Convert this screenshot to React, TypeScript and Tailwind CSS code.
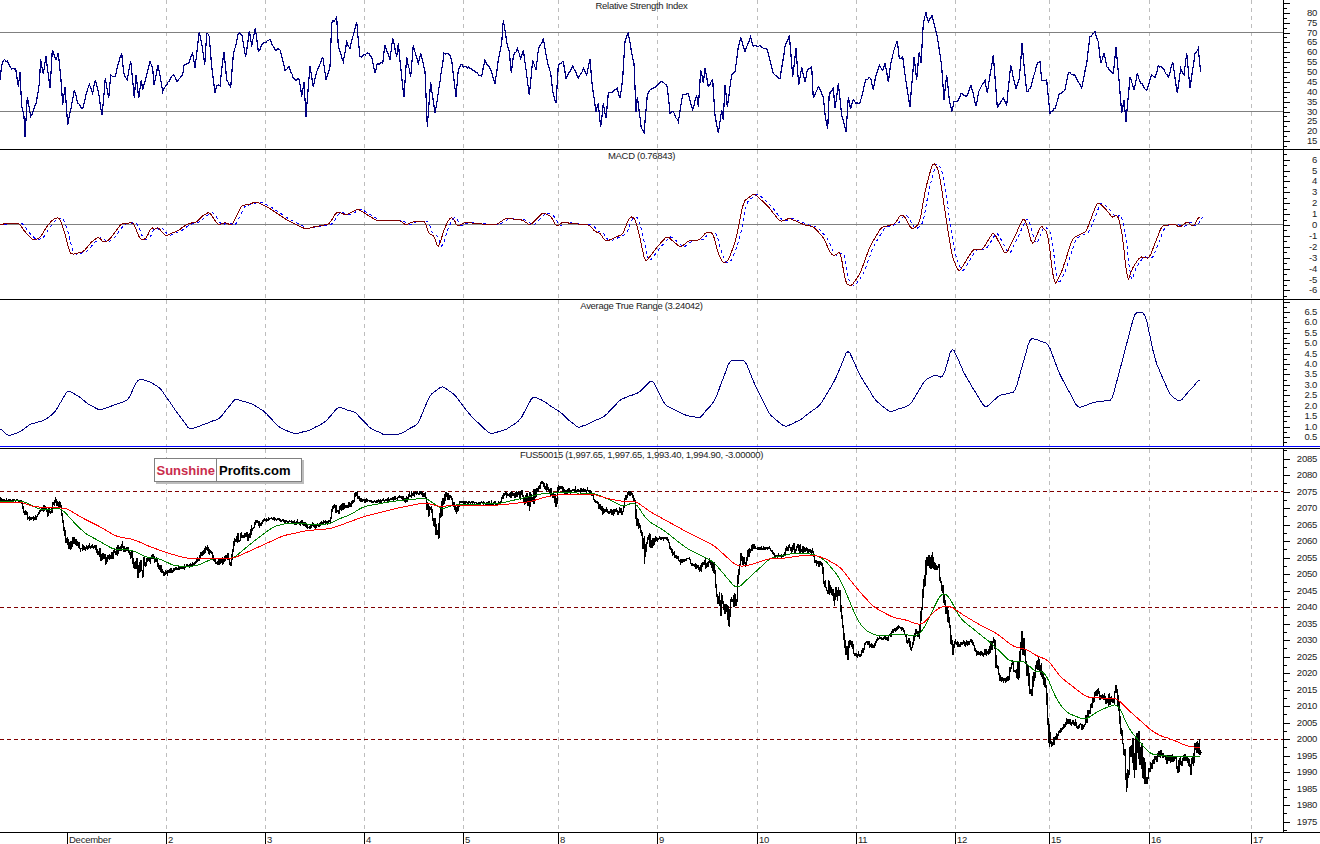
import type { ReactNode } from 'react';

type Pt = [number, number, number?];

const PLOT_W = 1283;
const GRID_X = [166, 265, 364, 463, 558, 657, 757, 856, 955, 1049, 1149, 1251];
const DAYS: [number, string][] = [
  [67, 'December'], [166, '2'], [265, '3'], [364, '4'], [463, '5'], [558, '8'], [657, '9'],
  [757, '10'], [856, '11'], [955, '12'], [1049, '15'], [1149, '16'], [1251, '17'],
];

// traced from crops of the chart, so each block has its own origin and scale
const at = (ox: number, oy: number, sx: number, sy: number, pts: Pt[]): Pt[] =>
  pts.map(([x, y, a]) => [ox + x / sx, oy + y / sy, a]);

const join = (...parts: Pt[][]) => {
  const out: Pt[] = [];
  parts.forEach(part =>
    part.forEach(p => {
      if (!out.length || p[0] > out[out.length - 1][0]) out.push(p);
    }),
  );
  return out;
};

const jag = (i: number) => {
  const s = Math.sin(i * 12.9898) * 43758.5453;
  return (s - Math.floor(s) - 0.5) * 2;
};

const sample = (pts: Pt[], step: number, noise: number) => {
  const out: [number, number][] = [];
  let n = 0;
  for (let i = 0; i < pts.length - 1; i++) {
    const [x0, y0, a0] = pts[i];
    const [x1, y1, a1] = pts[i + 1];
    const count = Math.max(1, Math.round((x1 - x0) / step));
    for (let k = 0; k < count; k++) {
      const t = k / count;
      const amp = (a0 ?? noise) * (1 - t) + (a1 ?? noise) * t;
      out.push([x0 + (x1 - x0) * t, y0 + (y1 - y0) * t + (k === 0 ? 0 : amp * jag(n++))]);
    }
  }
  const last = pts[pts.length - 1];
  out.push([last[0], last[1]]);
  return out;
};

// walk along the knots, add some tick noise, optionally round it off with a moving average
const trace = (pts: Pt[], step = 1, noise = 0, radius = 0) => {
  const raw = sample(pts, step, noise);
  return raw
    .map(([x], i) => {
      const from = Math.max(0, i - radius);
      const to = Math.min(raw.length - 1, i + radius);
      let sum = 0;
      for (let k = from; k <= to; k++) sum += raw[k][1];
      return `${x.toFixed(1)},${(sum / (to - from + 1)).toFixed(1)}`;
    })
    .join(' ');
};

const RSI = join(
  at(0, 0, 3, 3, [[0,240],[5,195],[14,178],[25,190],[35,207],[47,207],[55,260],[60,217],[65,320],[72,350],[75,410],[82,290],[92,350],[108,310],[118,250],[122,178],[130,222],[138,168],[150,265],[157,150],[168,180],[175,158],[183,240],[188,315],[195,262],[203,375],[213,325],[223,270],[233,310],[248,325],[258,285],[268,252],[278,280],[286,240],[296,280],[306,345],[316,235],[326,295],[332,225],[345,230],[352,200],[365,160],[372,222],[382,240],[392,182],[403,295],[408,225],[416,295],[424,240],[428,270],[440,225],[450,185],[458,205],[462,255],[474,195],[488,275],[500,255],[520,225],[532,245],[548,225],[552,195],[566,190],[578,160],[585,205],[598,95],[605,130],[614,195],[620,100],[628,110],[635,200],[645,278],[650,258],[660,258],[665,210],[672,155],[680,240],[692,262],[700,165],[715,100],[726,105],[737,170],[748,92],[755,140],[766,85],[775,155],[790,130],[810,118],[825,150],[840,150],[855,210],[868,200],[880,235],[898,240],[905,290],[912,245],[918,350],[930,197],[940,260],[950,215],[968,170],[978,240],[990,200],[995,70],[1010,52],[1015,140],[1030,185],[1040,125],[1050,145],[1060,105],[1070,65],[1080,170],[1100,160],[1115,170],[1125,218],[1132,190],[1148,190],[1155,135],[1170,180],[1178,115],[1190,170],[1195,130],[1205,230],[1212,290],[1220,172],[1232,230],[1240,135],[1255,190],[1262,160],[1275,215],[1282,380],[1292,245],[1305,340],[1320,245]]),
  at(430, 0, 3, 3, [[30,240],[42,160],[55,160],[65,180],[72,240],[78,290],[85,210],[92,195],[120,205],[155,228],[165,180],[180,205],[195,250],[205,180],[215,130],[220,60],[230,125],[238,155],[244,220],[250,170],[262,145],[272,175],[280,150],[292,240],[298,285],[308,180],[318,210],[325,150],[340,115],[350,175],[362,220],[368,275],[378,310],[385,195],[400,185],[408,235],[428,198],[445,235],[460,205],[470,225],[480,178],[487,260],[498,335],[505,310],[512,380],[520,310],[528,355],[535,280],[550,275],[562,265],[570,295],[578,235],[585,125],[595,100],[605,160],[612,190],[618,335],[622,290],[634,385],[642,398],[652,285],[660,270],[680,258],[690,247],[700,247],[712,262],[720,340],[730,335],[745,365],[758,285],[775,280],[788,330],[800,285],[805,320],[812,210],[820,250],[825,205],[835,260],[848,240],[855,345],[865,400],[875,330],[880,360],[885,255],[892,320],[905,225],[915,215],[925,140],[932,112],[945,155],[962,110],[970,140],[990,135],[1012,150],[1030,220],[1050,235],[1065,140],[1078,105],[1088,230],[1098,145],[1106,255],[1115,200],[1125,245],[1132,210],[1145,200],[1150,295],[1165,260],[1180,290],[1186,350],[1193,388],[1198,275]]),
  at(820, 0, 3, 3, [[30,280],[40,265],[45,325],[55,250],[65,345],[78,395],[85,290],[92,328],[100,300],[108,310],[120,308],[128,280],[138,237],[152,235],[160,270],[168,225],[178,195],[188,210],[195,190],[205,245],[212,190],[222,150],[232,122],[238,175],[248,170],[258,245],[270,320],[282,170],[290,240],[298,155],[303,190],[310,70],[318,38],[325,65],[336,45],[352,110],[358,150],[365,200],[372,300],[380,225],[388,300],[395,335],[402,305],[415,300],[423,280],[440,290],[453,255],[468,318],[476,275],[495,240],[502,280],[510,225],[520,165],[532,322],[550,295],[560,315],[572,195],[580,235],[588,265],[598,235],[606,130],[620,275],[632,265],[650,195],[660,185],[665,240],[680,240],[690,340],[705,325],[718,280],[735,270],[745,218],[765,225],[785,265],[800,190],[810,110],[825,95],[835,125],[842,190],[852,160],[860,200],[880,220],[888,140],[898,250],[905,340],[912,300],[918,365],[930,230],[942,270],[952,220],[962,250],[980,270],[995,225],[1005,232],[1015,197],[1030,205],[1045,232],[1058,185],[1072,280],[1082,205],[1092,225],[1100,160],[1110,265],[1125,160],[1135,145],[1142,215]]),
);

const MACD = join(
  at(0, 150, 2.613, 3, [[0,225],[15,220],[50,220],[65,245],[88,272],[105,262],[125,225],[140,207],[155,202],[170,250],[182,310],[190,313],[218,305],[240,275],[258,260],[270,278],[285,270],[318,220],[332,222],[344,214],[355,235],[365,267],[382,267],[395,230],[405,240],[412,230],[432,258],[465,242],[490,222],[515,215],[530,197],[547,186],[570,225],[590,217],[605,228],[632,165],[645,165],[670,155],[700,172],[750,210],[800,238],[815,232],[860,222],[880,185],[905,195],[935,177],[985,212],[1045,212],[1060,225],[1085,213],[1110,213],[1120,250],[1135,258],[1145,298],[1160,240],[1175,203],[1185,205],[1195,230],[1215,217],[1260,222],[1295,225],[1322,205],[1365,210],[1385,226],[1420,187],[1440,200],[1455,232],[1468,217],[1510,222],[1540,225],[1555,245],[1568,250]]),
  at(600, 150, 2.613, 3, [[0,250],[15,275],[60,252],[75,205],[88,198],[100,240],[118,338],[150,290],[175,258],[210,292],[235,270],[260,270],[278,246],[295,248],[310,315],[322,340],[335,332],[355,270],[375,155],[403,130],[440,170],[470,215],[495,205],[535,225],[558,230],[585,265],[600,305],[610,318],[628,305],[642,400],[657,408],[680,370],[705,290],[735,232],[770,222],[785,195],[795,197],[815,240],[835,220],[850,120],[870,35],[885,60],[905,210],[920,320],[938,367],[975,298],[1000,298],[1028,245],[1060,315],[1085,257],[1105,205],[1112,210],[1130,288],[1152,226],[1170,250],[1187,407],[1205,370],[1235,265],[1270,245],[1300,155],[1320,175],[1340,205],[1352,190],[1365,250],[1378,400],[1392,352],[1412,320],[1435,325],[1468,228],[1500,222],[1515,232],[1535,215],[1550,232],[1566,197]]),
);
const MACD_SIGNAL: Pt[] = MACD.map(([x, y]) => [x + 3.5, y]);

const ATR: Pt[] = [[0,428],[8,436],[20,432],[30,424],[45,420],[55,412],[68,390],[78,396],[90,405],[100,410],[115,405],[128,400],[138,379],[148,381],[160,388],[175,410],[190,430],[205,424],[220,418],[235,399],[250,403],[265,412],[280,428],[295,434],[310,430],[325,422],[338,407],[355,412],[370,428],[385,435],[400,434],[418,424],[430,395],[442,386],[455,395],[470,415],[490,434],[505,430],[520,420],[533,396],[545,402],[560,412],[578,428],[590,423],[605,416],[620,400],[640,392],[652,379],[665,405],[685,415],[700,418],[715,400],[730,360],[745,360],[755,385],[770,415],[785,427],[800,420],[820,405],[835,380],[848,349],[860,375],[875,400],[890,412],[910,405],[925,380],[935,375],[943,378],[952,346],[965,375],[985,408],[1000,395],[1015,392],[1030,338],[1048,343],[1060,375],[1078,408],[1095,402],[1112,400],[1125,350],[1135,312],[1145,313],[1155,360],[1170,395],[1180,402],[1190,390],[1200,379]];

const PRICE = join(
  at(0, 420, 3, 3, [[0,240,1],[65,242,1],[70,270,3],[90,298,3],[105,300,2],[125,270,3],[150,275,5],[165,245,4],[180,250,4],[190,310,6],[200,360,5],[205,380,6],[225,360,5],[245,385,3],[285,378,2],[305,410,7],[320,420,5],[345,395,5],[370,380,7],[385,390,5],[410,440,10],[425,450,10],[445,420,8],[465,415,6],[490,460,3],[530,445,2],[560,438,2],[585,430,2],[605,400,4],[625,385,3],[650,430,4],[680,410,5],[695,425,5],[705,360,5],[730,345,5],[745,350,5],[768,300,5],[780,315,3],[790,300,1],[820,295,1],[860,305,1],[910,310,2],[925,322,3],[960,310,3],[990,305,2],[1000,265,5],[1020,265,5]]),
  at(330, 470, 3, 3, [[30,120,5],[60,105,4],[80,70,5],[90,90,2],[130,95,1],[170,90,1],[215,80,2],[225,95,3],[245,72,2],[285,72,3],[292,120,8],[305,115,6],[315,170,12],[325,190,10],[340,90,10],[350,80,5],[365,85,3],[375,115,4],[385,120,8],[390,95,1],[440,100,1],[510,100,2],[520,72,3],[580,75,5],[590,95,12],[605,90,10],[620,70,6],[635,40,4],[660,62,5],[680,85,12],[690,50,3],[710,65,3],[730,60,1],[780,62,2],[800,95,3],[815,120,4],[830,125,3],[880,125,4],[885,85,6],[895,65,3],[915,90,4],[920,150,6],[935,190,6],[945,250,15],[955,205,8],[965,220,6],[985,205,1],[1012,205,1],[1025,245,3],[1050,275,3],[1075,265,1],[1090,285,3],[1110,295,6],[1140,280,4],[1155,300,8],[1160,370,4],[1170,405,15],[1190,405,8],[1195,460,15],[1205,385,10],[1220,400,8],[1225,310,6],[1235,260,6],[1245,280,6],[1265,225,6],[1280,235,1],[1320,235,1]]),
  at(760, 530, 3, 3, [[30,60,1],[45,78,1],[70,78,1],[85,50,4],[110,55,5],[160,65,2],[165,100,3],[188,105,3],[193,165,8],[205,185,12],[225,200,10],[240,180,5],[245,260,8],[255,340,10],[262,380,8],[270,330,8],[285,370,3],[300,380,3],[320,335,2],[340,350,3],[355,325,1],[385,325,3],[410,295,2],[430,295,2],[445,335,5],[455,355,3],[470,300,5],[480,300,10],[490,170,10],[500,100,10],[520,90,10],[535,110,6],[545,160,5],[555,220,10],[570,290,15],[578,375,10],[585,335,2],[600,345,3],[640,335,3],[650,375,3],[685,365,4],[695,340,12],[703,330,5],[710,410,10],[725,455,4],[745,450,3],[755,400,6],[775,425,10],[788,340,20],[800,410,8],[815,490,15],[825,440,8],[838,390,8],[850,450,10],[860,480,6],[865,590,25],[875,645,6],[885,625,4],[900,605,3],[925,570,3],[965,595,4],[990,545,6],[1005,485,6],[1030,505,6],[1060,510,8],[1070,480,8],[1080,560,15],[1090,640,15],[1100,785,25],[1112,650,35],[1125,700,30],[1135,660,35],[1150,710,18],[1160,745,8],[1175,705,5],[1200,670,5]]),
  at(1100, 660, 3, 3, [[180,285,4],[200,300,5],[225,290,4],[235,320,8],[250,295,5],[262,290,5],[272,335,8],[285,270,10],[295,250,8],[303,280,10]]),
);

const MA_RED = join(
  at(0, 420, 3, 3, [[0,248],[65,247],[100,260],[200,265],[240,290],[300,320],[350,350],[400,358],[450,380],[500,398],[560,415],[700,415],[800,370],[850,347],[920,332],[990,326],[1020,316]]),
  at(330, 470, 3, 3, [[30,165],[100,140],[200,115],[285,98],[330,110],[370,105],[510,105],[600,95],[650,80],[700,73],[790,72],[830,85],[880,95],[915,92],[960,125],[1060,180],[1150,225],[1220,288],[1250,288],[1320,265]]),
  at(760, 530, 3, 3, [[30,87],[85,84],[110,78],[160,75],[190,83],[240,110],[290,175],[340,230],[400,263],[440,270],[470,283],[490,283],[520,245],[550,228],[570,228],[610,255],[660,285],[710,310],[760,350],[800,358],[830,378],[865,390],[900,440],[980,502],[1070,506]]),
  at(1100, 660, 3, 3, [[55,118],[85,150],[150,208],[175,225],[215,238],[260,258],[300,263]]),
);

const MA_GREEN = join(
  at(0, 420, 3, 3, [[0,245],[65,242],[100,258],[120,270],[185,265],[210,295],[255,340],[310,370],[340,388],[395,390],[440,412],[475,415],[525,438],[590,438],[640,415],[700,415],[760,365],[820,320],[860,310],[920,312],[990,312],[1020,295]]),
  at(330, 470, 3, 3, [[30,143],[60,135],[100,110],[180,95],[240,88],[290,85],[335,118],[370,105],[510,100],[640,70],[700,68],[790,70],[830,85],[880,110],[915,95],[950,150],[1000,180],[1070,235],[1150,275],[1220,358],[1320,265]]),
  at(760, 530, 3, 3, [[25,82],[100,70],[160,72],[195,90],[240,145],[290,265],[310,297],[350,318],[430,312],[470,320],[490,300],[545,185],[565,195],[600,265],[700,345],[750,395],[800,395],[820,425],[855,425],[890,510],[920,548],[975,570],[1020,540],[1075,520]]),
  at(1100, 660, 3, 3, [[85,205],[150,282],[215,290],[300,290]]),
);

function Grid({ top, height }: { top: number; height: number }) {
  return (
    <>
      {GRID_X.map(x => (
        <line key={x} x1={x + 0.5} x2={x + 0.5} y1={top} y2={top + height} stroke="#bdbdbd" strokeDasharray="4 4" />
      ))}
    </>
  );
}

interface AxisProps {
  top: number;
  height: number;
  zeroY: number;
  stepPx: number;
  stepValue: number;
  zeroValue: number;
  decimals?: number;
}

function Axis({ top, height, zeroY, stepPx, stepValue, zeroValue, decimals = 0 }: AxisProps) {
  const majors: number[] = [];
  for (let i = -30; i < 30; i++) majors.push(i);
  return (
    <svg className="block h-full w-[36px]" viewBox={`0 ${top} 36 ${height}`} shapeRendering="crispEdges">
      {majors.map(i => {
        const y = Math.round(zeroY + i * stepPx);
        const minor = Math.round(zeroY + (i + 0.5) * stepPx);
        const value = zeroValue - i * stepValue;
        const labelled = y > top + 4 && y < top + height - 4;
        return (
          <g key={i}>
            <line x1={0} x2={6} y1={y + 0.5} y2={y + 0.5} stroke="#000" />
            <line x1={0} x2={3} y1={minor + 0.5} y2={minor + 0.5} stroke="#000" />
            {labelled && (
              <text x={33} y={y + 3} textAnchor="end" fill="#1c1c1c" shapeRendering="auto" className="font-['Liberation_Sans',sans-serif] text-[9.5px] tracking-[-0.25px]">
                {value.toFixed(decimals)}
              </text>
            )}
          </g>
        );
      })}
    </svg>
  );
}

interface PanelProps {
  top: number;
  height: number;
  title: string;
  axis: Omit<AxisProps, 'top' | 'height'>;
  className?: string;
  children: ReactNode;
  overlay?: ReactNode;
}

function Panel({ top, height, title, axis, className, children, overlay }: PanelProps) {
  return (
    <div className={`box-content flex shrink-0 ${className ?? ''}`} style={{ height }}>
      <div className="relative h-full w-[1283px] shrink-0 overflow-hidden">
        <svg className="block h-full w-full" viewBox={`0 ${top} ${PLOT_W} ${height}`} shapeRendering="crispEdges">
          <Grid top={top} height={height} />
          {children}
        </svg>
        <div className="absolute inset-x-0 top-0 text-center font-['Liberation_Sans',sans-serif] text-[9.5px] leading-[11px] tracking-[-0.3px] text-[#1c1c1c]">
          {title}
        </div>
        {overlay}
      </div>
      <div className="h-full border-l border-black">
        <Axis top={top} height={height} {...axis} />
      </div>
    </div>
  );
}

function HLine({ y, stroke, dash }: { y: number; stroke: string; dash?: string }) {
  return <line x1={0} x2={PLOT_W} y1={y + 0.5} y2={y + 0.5} stroke={stroke} strokeDasharray={dash} />;
}

function Logo() {
  return (
    <div className="absolute left-[154px] top-[9px] flex h-[24px] w-[148px] items-center border border-[#808080] bg-white font-['Liberation_Sans',sans-serif] text-[13px] font-bold leading-none shadow-[2px_2px_0_#bdbdbd]">
      <span className="flex h-full w-[62px] items-center justify-end border-r border-[#808080] pr-px text-[#c92c4c]">Sunshine</span>
      <span className="pl-[2px] text-black">Profits.com</span>
    </div>
  );
}

export default function App() {
  return (
    <div className="flex h-[844px] w-[1320px] flex-col overflow-hidden bg-white">
      <Panel
        top={0}
        height={149}
        title="Relative Strength Index"
        className="border-b border-black"
        axis={{ zeroY: 32.5, stepPx: 9.875, stepValue: 5, zeroValue: 70 }}
      >
        <HLine y={32} stroke="#808080" />
        <HLine y={111} stroke="#808080" />
        <polyline points={trace(RSI, 1.4, 1.2)} fill="none" stroke="#000080" strokeWidth={1.2} />
      </Panel>

      <Panel
        top={150}
        height={149}
        title="MACD (0.76843)"
        className="border-b border-black"
        axis={{ zeroY: 225, stepPx: 10.9, stepValue: 1, zeroValue: 0 }}
      >
        <HLine y={224} stroke="#808080" />
        <polyline points={trace(MACD_SIGNAL, 1.5, 0, 1)} fill="none" stroke="#0000ff" strokeDasharray="3 3" />
        <polyline points={trace(MACD, 1.5, 0, 1)} fill="none" stroke="#800000" />
      </Panel>

      <Panel
        top={300}
        height={146}
        title="Average True Range (3.24042)"
        axis={{ zeroY: 437, stepPx: 10.42, stepValue: 0.5, zeroValue: 0.5, decimals: 1 }}
      >
        <polyline points={trace(ATR, 2, 0.5, 1)} fill="none" stroke="#000080" />
      </Panel>
      <div className="h-px shrink-0 bg-[#0000ff]" />
      <div className="h-[2px] shrink-0 border-b border-black" />

      <Panel
        top={449}
        height={383}
        title="FUS50015 (1,997.65, 1,997.65, 1,993.40, 1,994.90, -3.00000)"
        className="border-b border-black"
        axis={{ zeroY: 458.5, stepPx: 16.5, stepValue: 5, zeroValue: 2085 }}
        overlay={<Logo />}
      >
        <HLine y={491} stroke="#800000" dash="4 3" />
        <HLine y={607} stroke="#800000" dash="4 3" />
        <HLine y={739} stroke="#800000" dash="4 3" />
        <polyline points={trace(PRICE, 0.5)} fill="none" stroke="#000" strokeWidth={1.4} />
        <polyline points={trace(MA_GREEN, 2, 0, 2)} fill="none" stroke="#008000" />
        <polyline points={trace(MA_RED, 2, 0, 2)} fill="none" stroke="#ff0000" />
      </Panel>

      <svg className="h-[11px] w-full shrink-0" viewBox="0 833 1320 11" shapeRendering="crispEdges">
        {DAYS.map(([x, label]) => (
          <g key={label}>
            <line x1={x + 0.5} x2={x + 0.5} y1={833} y2={844} stroke="#000" />
            <text x={x + 2} y={843} fill="#1c1c1c" shapeRendering="auto" className="font-['Liberation_Sans',sans-serif] text-[9.5px] tracking-[-0.25px]">
              {label}
            </text>
          </g>
        ))}
      </svg>
    </div>
  );
}
